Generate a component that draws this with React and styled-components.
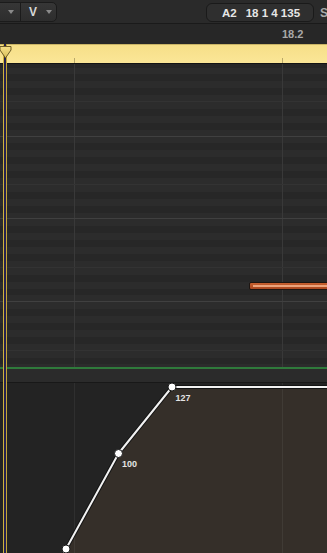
import React from "react";
import styled, { createGlobalStyle } from "styled-components";

const GlobalStyle = createGlobalStyle`
  html, body {
    margin: 0;
    padding: 0;
    background: #232323;
  }
  body {
    font-family: "Liberation Sans", Arial, sans-serif;
  }
`;

// piano roll geometry
const ROW_H = 83 / 12;
const BEATS = [74, 282];
const OCTAVE = ["B", "A#", "A", "G#", "G", "F#", "F", "E", "D#", "D", "C#", "C"];
const ROWS = Array.from({ length: 46 }, (_, i) => OCTAVE[i % 12]);

const beatLines = color =>
  BEATS.map(
    x =>
      `linear-gradient(to right, transparent ${x}px, ${color} ${x}px, ${color} ${x + 1}px, transparent ${x + 1}px)`
  ).join(", ");

const Window = styled.div`
  width: 327px;
  height: 553px;
  overflow: hidden;
  display: flex;
  flex-direction: column;
  background: #232323;
`;

const Toolbar = styled.div`
  height: 24px;
  box-sizing: border-box;
  flex: none;
  display: flex;
  align-items: flex-start;
  padding-top: 2px;
  overflow: hidden;
  background: #2a2a2a;
  border-bottom: 1px solid #1a1a1a;
`;

const Segmented = styled.div`
  display: flex;
  flex: none;
  height: 20px;
  margin-left: -12px;
  box-sizing: border-box;
  border: 1px solid #1b1b1b;
  border-radius: 5px;
  overflow: hidden;
  background: linear-gradient(#363636, #2d2d2d);
`;

const SegButton = styled.div`
  width: ${p => p.$width}px;
  box-sizing: border-box;
  display: flex;
  align-items: center;
  justify-content: ${p => (p.$alignEnd ? "flex-end" : "flex-start")};
  padding: ${p => (p.$alignEnd ? "0 6px 0 0" : "0 0 0 8px")};
  border-left: ${p => (p.$divided ? "1px solid #1b1b1b" : "none")};
  color: #d8d8d8;
  font-size: 12px;
  font-weight: bold;
`;

const Caret = styled.span`
  width: 0;
  height: 0;
  margin-left: ${p => p.$gap || 0}px;
  border-left: 3px solid transparent;
  border-right: 3px solid transparent;
  border-top: 4px solid #8a8a8a;
`;

const Lcd = styled.div`
  flex: none;
  margin-left: 149px;
  width: 108px;
  height: 19px;
  margin-top: 1px;
  box-sizing: border-box;
  display: flex;
  align-items: center;
  padding-left: 15px;
  gap: 9px;
  border: 1px solid #1a1a1a;
  border-radius: 6px;
  background: #2f2f2f;
  color: #e6e6e6;
  font-size: 11.5px;
  font-weight: bold;
  white-space: pre;
`;

const SnapLabel = styled.span`
  flex: none;
  margin-left: 6px;
  margin-top: 4px;
  color: #a8a8a8;
  font-size: 12px;
  font-weight: bold;
  white-space: nowrap;
`;

const Ruler = styled.div`
  height: 20px;
  flex: none;
  box-sizing: border-box;
  padding-left: 282px;
  padding-top: 4px;
  background: #272727;
  color: #a9a9a9;
  font-size: 11px;
  font-weight: bold;
`;

const Timeline = styled.div`
  position: relative;
  flex: 1;
  display: flex;
  flex-direction: column;
`;

const CycleBar = styled.div`
  position: relative;
  height: 20px;
  flex: none;
  box-sizing: border-box;
  background: linear-gradient(#f6df88, #fbe697);
  border-top: 1px solid #c9b466;
  border-bottom: 1px solid #141414;
`;

const Tick = styled.span`
  position: absolute;
  bottom: 0;
  left: ${p => p.$x}px;
  width: 1px;
  height: 5px;
  background: #b9a869;
`;

const Grid = styled.div`
  position: relative;
  height: 303px;
  flex: none;
  overflow: hidden;
`;

const Keys = styled.div`
  display: flex;
  flex-direction: column;
  margin-top: -10.3px;
`;

const KeyRow = styled.div`
  height: ${ROW_H}px;
  flex: none;
  background-color: ${p => (p.$black ? "#272727" : "#2c2c2c")};
  background-image: ${beatLines("#393939")};
  box-shadow: ${p =>
    p.$octave
      ? "inset 0 -1px 0 #404040"
      : p.$fold
      ? "inset 0 -1px 0 #333333"
      : "none"};
`;

const Note = styled.div`
  position: absolute;
  left: 249px;
  right: -6px;
  top: ${p => p.$top}px;
  height: 8px;
  box-sizing: border-box;
  border: 1px solid #1d1511;
  border-radius: 2px;
  background: linear-gradient(#c8602f, #a9471f);
  display: flex;
  align-items: center;
  padding-left: 3px;

  &::after {
    content: "";
    flex: 1;
    height: 2px;
    background: #eba47c;
  }
`;

const GreenLine = styled.div`
  height: 2px;
  flex: none;
  background: #2f7a3b;
`;

const LaneHeader = styled.div`
  height: 13px;
  flex: none;
  background-color: #2b2b2b;
  border-bottom: 1px solid #181818;
`;

const Lane = styled.svg`
  display: block;
  flex: none;
`;

const Playhead = styled.div`
  position: absolute;
  top: 0;
  bottom: 0;
  left: 3px;
  width: 4px;
  pointer-events: none;
  background: linear-gradient(
    to right,
    #cfb23c 0 1px,
    #26224e 1px 3px,
    #c4a636 3px 4px
  );
`;

const PlayheadCap = styled.svg`
  position: absolute;
  top: 1px;
  left: -1px;
  pointer-events: none;
`;

// velocity/automation lane
const POINTS = [
  { x: 66, y: 166, label: null },
  { x: 118.5, y: 70.5, label: "100" },
  { x: 172, y: 4, label: "127" },
];

const AutomationLane = () => {
  const start = { x: 63.5, y: 171 };
  const line = [start, ...POINTS, { x: 330, y: 4 }]
    .map(p => `${p.x},${p.y}`)
    .join(" ");
  const fill = `${line} 330,171`;
  return (
    <Lane width="327" height="170" viewBox="0 0 327 170">
      <rect width="327" height="170" fill="#232323" />
      <polygon points={fill} fill="#352f29" />
      {BEATS.map(x => (
        <rect key={x} x={x} y="0" width="1" height="170" fill="rgba(255,255,255,0.06)" />
      ))}
      <polyline points={line} fill="none" stroke="#141414" strokeWidth="4" strokeLinejoin="round" />
      <polyline points={line} fill="none" stroke="#f2f2f2" strokeWidth="2" strokeLinejoin="round" />
      {POINTS.map(p => (
        <circle key={p.x} cx={p.x} cy={p.y} r="4" fill="#ffffff" stroke="#1a1a1a" strokeWidth="1" />
      ))}
      {POINTS.filter(p => p.label).map(p => (
        <text
          key={p.label}
          x={p.x + 3.5}
          y={p.y + 13.5}
          fill="#e4e4e4"
          fontSize="9"
          fontWeight="bold"
          fontFamily="'Liberation Sans', Arial, sans-serif"
        >
          {p.label}
        </text>
      ))}
    </Lane>
  );
};

const App = () => {
  return (
    <>
      <GlobalStyle />
      <Window>
        <Toolbar>
          <Segmented>
            <SegButton $width={31} $alignEnd>
              <Caret />
            </SegButton>
            <SegButton $width={36} $divided>
              V<Caret $gap={9} />
            </SegButton>
          </Segmented>
          <Lcd>
            <span>A2</span>
            <span>18 1 4 135</span>
          </Lcd>
          <SnapLabel>Snap</SnapLabel>
        </Toolbar>

        <Ruler>18.2</Ruler>

        <Timeline>
          <CycleBar>
            {BEATS.map(x => (
              <Tick key={x} $x={x} />
            ))}
          </CycleBar>

          <Grid>
            <Keys>
              {ROWS.map((key, i) => (
                <KeyRow
                  key={i}
                  $black={key.includes("#")}
                  $octave={key === "C"}
                  $fold={key === "F"}
                />
              ))}
            </Keys>
            <Note $top={217.8} />
          </Grid>

          <GreenLine />
          <LaneHeader />
          <AutomationLane />

          <Playhead />
          <PlayheadCap width="13" height="15" viewBox="0 0 13 15">
            <defs>
              <linearGradient id="cap" x1="0" y1="0" x2="0" y2="1">
                <stop offset="0" stopColor="#f6e08a" />
                <stop offset="1" stopColor="#d9bf58" />
              </linearGradient>
            </defs>
            <path
              d="M1 1.5 H12 V5 L6.5 13 L1 5 Z"
              fill="url(#cap)"
              stroke="#6e5d27"
              strokeWidth="1"
              strokeLinejoin="round"
            />
          </PlayheadCap>
        </Timeline>
      </Window>
    </>
  );
};

export default App;
